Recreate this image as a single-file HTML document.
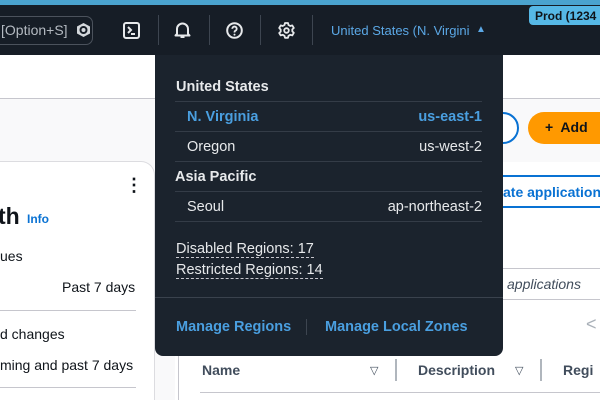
<!DOCTYPE html>
<html style="overflow:hidden;height:400px"><head><style>
*{margin:0;padding:0;box-sizing:border-box}
body{width:600px;height:400px;overflow:hidden;position:relative;background:#f9f9fa;font-family:"Liberation Sans",sans-serif;color:#0f141a}
.a{position:absolute}
.top{left:0;top:0;width:600px;height:5px;background:#4aa3cf}
.hdr{left:0;top:5px;width:600px;height:50px;background:#161d26}
.sep{width:1px;height:30px;top:15px;background:#3d4550}
.dd{left:155px;top:55px;width:348px;height:301px;background:#1b232d;border-radius:0 0 8px 8px;color:#e7e9eb;font-size:14.5px}
.dd .row{position:absolute;left:20px;width:307px;height:30px;border-top:1px solid #343c47}
.dd b{font-weight:bold}
.link{color:#4a9fe0;font-weight:bold}
</style></head><body>
<div class="a" style="left:0;top:55px;width:600px;height:43px;background:#fff"></div>
<div class="a" style="left:0;top:98px;width:600px;height:1px;background:#c6c6cd"></div>
<div class="a top"></div>
<div class="a hdr"></div>
<div class="a" style="left:-10px;top:16px;width:103px;height:29px;border:1.5px solid #4b525c;border-radius:7px;color:#b4bac1;font-size:14px;padding:5px 0 0 10px">[Option+S]
<svg style="position:absolute;left:85px;top:5px" width="15" height="16" viewBox="0 0 15 16"><path d="M7.5 1L14 4.5V11.5L7.5 15L1 11.5V4.5Z" fill="#d4d8dc"/><circle cx="7.5" cy="8" r="3" fill="none" stroke="#161d26" stroke-width="2"/></svg></div>
<svg class="a" style="left:123px;top:22px" width="17" height="17" viewBox="0 0 17 17"><rect x="1" y="1" width="15" height="15" rx="2" fill="none" stroke="#e7e9eb" stroke-width="2"/><path d="M5 5l3 3-3 3M8 12h4" stroke="#e7e9eb" stroke-width="2" fill="none"/></svg>
<div class="a sep" style="left:158px"></div>
<svg class="a" style="left:174px;top:21px" width="17" height="18" viewBox="0 0 17 18"><path d="M3 13V8a5.5 5.5 0 0 1 11 0v5l1.5 1.5h-14Z" fill="none" stroke="#e7e9eb" stroke-width="2" stroke-linejoin="round"/><path d="M6.5 16h4" stroke="#e7e9eb" stroke-width="2"/></svg>
<div class="a sep" style="left:209px"></div>
<svg class="a" style="left:226px;top:22px" width="17" height="17" viewBox="0 0 17 17"><circle cx="8.5" cy="8.5" r="7.3" fill="none" stroke="#e7e9eb" stroke-width="2"/><path d="M6.3 6.8a2.2 2.2 0 1 1 3 2c-.8.4-.8.8-.8 1.7" fill="none" stroke="#e7e9eb" stroke-width="1.8"/><circle cx="8.5" cy="12.6" r="1" fill="#e7e9eb"/></svg>
<div class="a sep" style="left:260px"></div>
<svg class="a" style="left:278px;top:22px" width="17" height="17" viewBox="0 0 17 17"><path d="M7 1h3l.5 2 1.8 1 2-.6 1.5 2.6-1.5 1.4v2l1.5 1.4-1.5 2.6-2-.6-1.8 1-.5 2H7l-.5-2-1.8-1-2 .6L1.2 11l1.5-1.4v-2L1.2 6l1.5-2.6 2 .6 1.8-1Z" fill="none" stroke="#e7e9eb" stroke-width="1.8" stroke-linejoin="round"/><circle cx="8.5" cy="8.5" r="2.3" fill="none" stroke="#e7e9eb" stroke-width="1.8"/></svg>
<div class="a sep" style="left:312px"></div>
<div class="a" style="left:331px;top:23px;color:#5ba8e6;font-size:13px;white-space:nowrap">United States (N. Virgini</div>
<div class="a" style="left:476px;top:24px;color:#5ba8e6;font-size:10px">▲</div>
<div class="a" style="left:529px;top:6px;width:80px;height:19px;background:#56b8e6;border-radius:4px 0 0 4px;color:#0f141a;font-size:12px;font-weight:bold;padding:3px 0 0 6px;white-space:nowrap">Prod (1234</div>

<!-- left card -->
<div class="a" style="left:-10px;top:161px;width:165px;height:239px;background:#fff;border:1px solid #dcdce0;border-bottom:none;border-radius:0 14px 0 0"></div>
<div class="a" style="left:125px;top:182px;font-size:18px;font-weight:bold;line-height:6px">⋮</div>
<div class="a" style="left:-2px;top:203px;font-size:23px;font-weight:bold">th</div>
<div class="a" style="left:27px;top:212px;font-size:12px;color:#0972d3;font-weight:bold">Info</div>
<div class="a" style="left:0;top:248px;font-size:14px">ues</div>
<div class="a" style="left:62px;top:279px;font-size:14px">Past 7 days</div>
<div class="a" style="left:0;top:310px;width:136px;height:1px;background:#c6c6cd"></div>
<div class="a" style="left:0;top:326px;font-size:14px">d changes</div>
<div class="a" style="left:0;top:357px;font-size:14px">ming and past 7 days</div>
<div class="a" style="left:0;top:387px;width:136px;height:1px;background:#c6c6cd"></div>

<!-- right area -->
<div class="a" style="left:175px;top:162px;width:425px;height:1px;background:#c6c6cd"></div>
<div class="a" style="left:175px;top:162px;width:425px;height:238px;background:#fff"></div>
<div class="a" style="left:480px;top:112px;width:39px;height:32px;border:2px solid #0972d3;border-radius:16px;background:#fff"></div>
<div class="a" style="left:528px;top:112px;width:72px;height:32px;background:#ff9900;border-radius:16px 0 0 16px;font-size:14px;font-weight:bold;padding:7px 0 0 17px;white-space:nowrap">+&nbsp; Add</div>
<div class="a" style="left:480px;top:175px;width:120px;height:33px;border:2px solid #0972d3;border-right:none;border-radius:16px 0 0 16px;color:#0972d3;font-size:14px;font-weight:bold;padding:7px 0 0 21px;white-space:nowrap;overflow:hidden">ate application</div>
<div class="a" style="left:175px;top:268px;width:425px;height:1px;background:#c6c6cd"></div>
<div class="a" style="left:507px;top:276px;font-size:14px;font-style:italic;color:#414d5c">applications</div>
<div class="a" style="left:175px;top:299px;width:425px;height:1px;background:#c6c6cd"></div>
<div class="a" style="left:586px;top:314px;font-size:18px;color:#aab1b9">&lt;</div>
<div class="a" style="left:178px;top:356px;width:1px;height:44px;background:#c6c6cd"></div>
<div class="a" style="left:202px;top:362px;font-size:14px;font-weight:bold;color:#414d5c">Name</div>
<div class="a" style="left:370px;top:364px;font-size:11px;color:#414d5c">▽</div>
<div class="a" style="left:395px;top:359px;width:2px;height:22px;background:#b0b6bd"></div>
<div class="a" style="left:418px;top:362px;font-size:14px;font-weight:bold;color:#414d5c">Description</div>
<div class="a" style="left:515px;top:364px;font-size:11px;color:#414d5c">▽</div>
<div class="a" style="left:540px;top:359px;width:2px;height:22px;background:#b0b6bd"></div>
<div class="a" style="left:563px;top:362px;font-size:14px;font-weight:bold;color:#414d5c">Regi</div>
<div class="a" style="left:200px;top:392px;width:400px;height:1px;background:#c6c6cd"></div>

<!-- dropdown -->
<div class="a dd">
<div class="a" style="left:21px;top:24px;font-weight:bold">United States</div>
<div class="row" style="top:46px"><span class="a link" style="left:12px;top:7px">N. Virginia</span><span class="a link" style="right:0;top:7px">us-east-1</span></div>
<div class="row" style="top:76px"><span class="a" style="left:12px;top:7px">Oregon</span><span class="a" style="right:0;top:7px">us-west-2</span></div>
<div class="row" style="top:106px;"><b class="a" style="left:0;top:7px">Asia Pacific</b></div>
<div class="row" style="top:136px"><span class="a" style="left:12px;top:7px">Seoul</span><span class="a" style="right:0;top:7px">ap-northeast-2</span></div>
<div class="row" style="top:166px;height:1px"></div>
<div class="a" style="left:21px;top:186px;border-bottom:1px dashed #c6c6cd;line-height:16px">Disabled Regions: 17</div>
<div class="a" style="left:21px;top:207px;border-bottom:1px dashed #c6c6cd;line-height:16px">Restricted Regions: 14</div>
<div class="a" style="left:0;top:242px;width:348px;height:1px;background:#3a424d"></div>
<div class="a link" style="left:21px;top:264px">Manage Regions</div>
<div class="a" style="left:151px;top:264px;width:1px;height:16px;background:#3d4550"></div>
<div class="a link" style="left:170px;top:264px">Manage Local Zones</div>
</div>
</body></html>
